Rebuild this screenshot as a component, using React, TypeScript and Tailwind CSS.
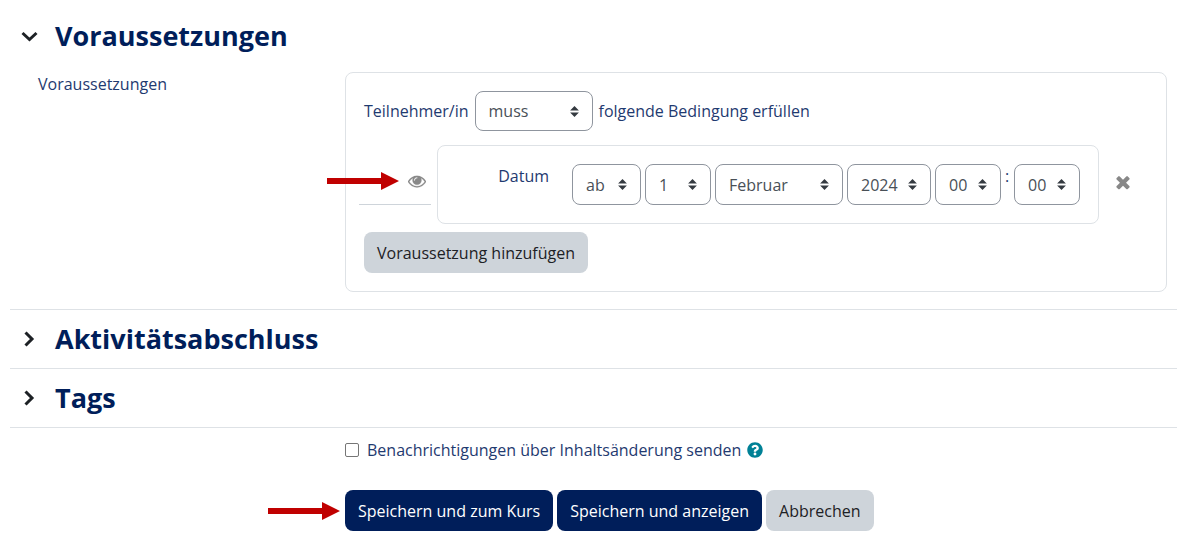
import type { ReactNode } from 'react';
import { FaQuestionCircle } from 'react-icons/fa';

interface SelectFieldProps {
  label: string;
  options: string[];
  className?: string;
}

function SelectField({ label, options, className = '' }: SelectFieldProps) {
  return (
    <span className={`relative inline-block ${className}`}>
      <select
        aria-label={label}
        className="h-full w-full appearance-none rounded-lg border border-[#8f959e] bg-white pl-[13px] text-[#495057]"
      >
        {options.map((option) => (
          <option key={option}>{option}</option>
        ))}
      </select>
      <svg
        viewBox="0 0 4 5"
        className="pointer-events-none absolute inset-y-0 right-3.5 my-auto h-[11px] w-[9px] fill-[#343a40]"
        aria-hidden="true"
      >
        <path d="M2 0L0 2h4zm0 5L0 3h4z" />
      </svg>
    </span>
  );
}

function Chevron({ open = false }: { open?: boolean }) {
  return (
    <svg
      viewBox="0 0 18 18"
      className="size-[18px] fill-none stroke-[#1d2125] stroke-3"
      aria-hidden="true"
    >
      <path d={open ? 'M2.5 6L9.5 12.5L16.500 6' : 'M5.500 2.500L12 9L5.500 15.500'} />
    </svg>
  );
}

function SectionHeader({ title, open = false }: { title: string; open?: boolean }) {
  return (
    <h3 className="flex h-[58px] items-center">
      <button
        type="button"
        aria-expanded={open}
        className="flex items-center gap-[17px] pl-2.5 text-[27px] leading-8 font-bold text-[#001e5a]"
      >
        <Chevron open={open} />
        {title}
      </button>
    </h3>
  );
}

function RedArrow() {
  return (
    <svg viewBox="0 0 72 18" className="h-[18px] w-[72px] fill-[#c00000]" aria-hidden="true">
      <path d="M0 6H54V0L72 9L54 18V12H0z" />
    </svg>
  );
}

function EyeIcon() {
  return (
    <svg viewBox="0 0 1792 1792" className="size-[18px] fill-[#888] stroke-[#888] stroke-20" aria-hidden="true">
      <path d="M1664 960q-152-236-381-353 61 104 61 225 0 185-131.500 316.500t-316.500 131.500-316.500-131.500-131.500-316.500q0-121 61-225-229 117-381 353 133 205 333.500 326.500t434.500 121.500 434.500-121.500 333.500-326.500zm-720-384q0-20-14-34t-34-14q-125 0-214.500 89.500t-89.500 214.500q0 20 14 34t34 14 34-14 14-34q0-86 61-147t147-61q20 0 34-14t14-34zm848 384q0 34-20 69-140 230-376.500 368.500t-499.500 138.500-499.500-139-376.500-368q-20-35-20-69t20-69q140-229 376.500-368t499.500-139 499.500 139 376.500 368q20 35 20 69z" />
    </svg>
  );
}

function TimesIcon() {
  return (
    <svg viewBox="0 0 1792 1792" className="size-5 fill-[#888]" aria-hidden="true">
      <path d="M1490 1322q0 40-28 68l-136 136q-28 28-68 28t-68-28l-294-294-294 294q-28 28-68 28t-68-28l-136-136q-28-28-28-68t28-68l294-294-294-294q-28-28-28-68t28-68l136-136q28-28 68-28t68 28l294 294 294-294q28-28 68-28t68 28l136 136q28 28 28 68t-28 68l-294 294 294 294q28 28 28 68z" />
    </svg>
  );
}

function FormButton({ primary = false, children }: { primary?: boolean; children: ReactNode }) {
  return (
    <button
      type="button"
      className={`h-[41px] rounded-lg px-[13px] ${
        primary ? 'bg-[#001e5a] text-white' : 'bg-[#ced4da] text-[#1d2125]'
      }`}
    >
      {children}
    </button>
  );
}

export default function App() {
  return (
    <form className="bg-white pl-2.5 font-['Open_Sans',sans-serif] text-base leading-6 text-[#1f3a70]">
      <section className="border-b border-[#dee2e6] pt-[7px] pb-[17px]">
        <SectionHeader title="Voraussetzungen" open />
        <div className="flex pt-[7px] pr-2.5">
          <div className="w-[335px] shrink-0 pl-7">Voraussetzungen</div>
          <div className="flex-1 rounded-lg border border-[#dee2e6] px-[18px] py-[18px]">
            <div className="flex items-center gap-1.5">
              <span>Teilnehmer/in</span>
              <SelectField label="Teilnehmer/in" options={['muss', 'darf nicht']} className="h-10 w-[118px]" />
              <span>folgende Bedingung erfüllen</span>
            </div>

            <div className="-ml-[5px] flex items-center pt-3.5 pb-2">
              <div className="relative mr-1.5 mb-1.5 flex h-[47px] w-[72px] items-center justify-end border-b border-[#ced4da] pr-[5px]">
                <button type="button" aria-label="Sichtbarkeit">
                  <EyeIcon />
                </button>
                <span className="absolute right-8 flex">
                  <RedArrow />
                </span>
              </div>
              <div className="flex flex-1 justify-end gap-[23px] rounded-lg border border-[#dee2e6] p-[18px]">
                <span>Datum</span>
                <div className="flex gap-1">
                  <SelectField label="Richtung" options={['ab', 'bis']} className="h-[41px] w-[69px]" />
                  <SelectField label="Tag" options={['1', '2', '3']} className="h-[41px] w-[66px]" />
                  <SelectField label="Monat" options={['Februar', 'März', 'April']} className="h-[41px] w-32" />
                  <SelectField label="Jahr" options={['2024', '2025']} className="h-[41px] w-[84px]" />
                  <SelectField label="Stunde" options={['00', '01']} className="h-[41px] w-[66px]" />
                  <span className="w-[5px]">:</span>
                  <SelectField label="Minute" options={['00', '05']} className="h-[41px] w-[66px]" />
                </div>
              </div>
              <button type="button" aria-label="Löschen" className="mr-3.5 mb-1.5 ml-[13px] p-px">
                <TimesIcon />
              </button>
            </div>

            <FormButton>Voraussetzung hinzufügen</FormButton>
          </div>
        </div>
      </section>

      <section className="border-b border-[#dee2e6]">
        <SectionHeader title="Aktivitätsabschluss" />
      </section>
      <section className="border-b border-[#dee2e6]">
        <SectionHeader title="Tags" />
      </section>

      <div className="pt-2.5 pl-[335px]">
        <div className="flex items-center">
          <label className="flex items-center gap-2">
            <input
              type="checkbox"
              className="size-3.5 appearance-none rounded-xs border border-[#767676] bg-white checked:bg-[#001e5a]"
            />
            Benachrichtigungen über Inhaltsänderung senden
          </label>
          <button type="button" aria-label="Hilfe" className="ml-1.5 text-base text-[#008196]">
            <FaQuestionCircle />
          </button>
        </div>
        <div className="relative mt-7 flex items-center gap-1">
          <span className="absolute right-full mr-[5px] flex">
            <RedArrow />
          </span>
          <FormButton primary>Speichern und zum Kurs</FormButton>
          <FormButton primary>Speichern und anzeigen</FormButton>
          <FormButton>Abbrechen</FormButton>
        </div>
      </div>
    </form>
  );
}
